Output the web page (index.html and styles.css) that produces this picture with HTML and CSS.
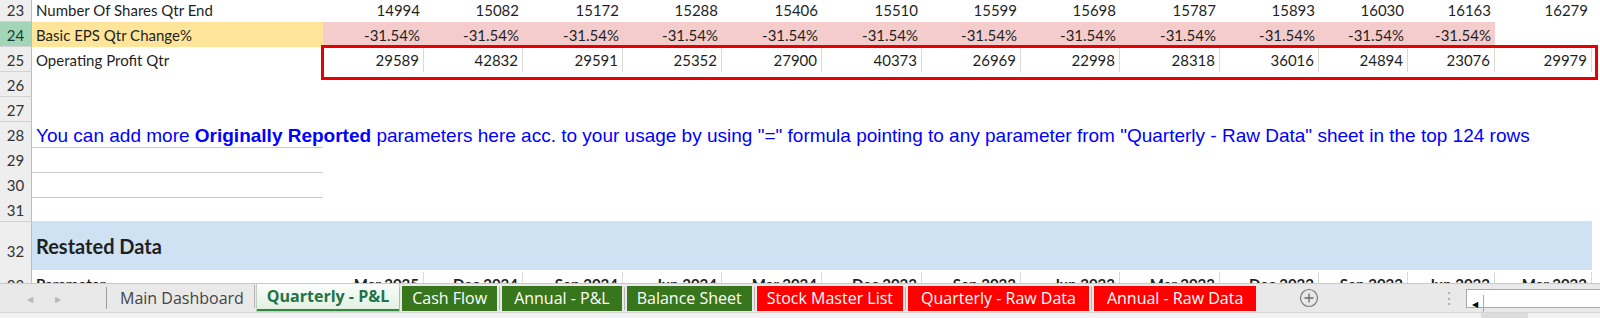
FILE: index.html
```html
<!DOCTYPE html>
<html>
  <head>
    <title>Quarterly - P&amp;L</title>
    <meta charset="UTF-8"/>
    <link rel="stylesheet" href="styles.css">
  </head>
  <body>
    <div class="sheet">
      <div class="rows">
        <div class="row">
          <div class="hd">23</div>
          <div class="c txt">Number Of Shares Qtr End</div>
          <div class="c">14994</div><div class="c">15082</div><div class="c">15172</div><div class="c">15288</div>
          <div class="c">15406</div><div class="c">15510</div><div class="c">15599</div><div class="c">15698</div>
          <div class="c">15787</div><div class="c">15893</div><div class="c">16030</div><div class="c">16163</div>
          <div class="c">16279</div>
        </div>
        <div class="row eps">
          <div class="hd sel">24</div>
          <div class="c txt yellow">Basic EPS Qtr Change%</div>
          <div class="c pink">-31.54%</div><div class="c pink">-31.54%</div><div class="c pink">-31.54%</div><div class="c pink">-31.54%</div>
          <div class="c pink">-31.54%</div><div class="c pink">-31.54%</div><div class="c pink">-31.54%</div><div class="c pink">-31.54%</div>
          <div class="c pink">-31.54%</div><div class="c pink">-31.54%</div><div class="c pink">-31.54%</div><div class="c pink">-31.54%</div>
          <div class="c"></div>
        </div>
        <div class="row lined">
          <div class="hd">25</div>
          <div class="c txt">Operating Profit Qtr</div>
          <div class="c">29589</div><div class="c">42832</div><div class="c">29591</div><div class="c">25352</div>
          <div class="c">27900</div><div class="c">40373</div><div class="c">26969</div><div class="c">22998</div>
          <div class="c">28318</div><div class="c">36016</div><div class="c">24894</div><div class="c">23076</div>
          <div class="c">29979</div>
        </div>
        <div class="row"><div class="hd">26</div></div>
        <div class="row"><div class="hd">27</div></div>
        <div class="row">
          <div class="hd">28</div>
          <div class="c note under">You can add more <b>Originally Reported</b> parameters here acc. to your usage by using "=" formula pointing to any parameter from "Quarterly - Raw Data" sheet in the top 124 rows</div>
        </div>
        <div class="row"><div class="hd">29</div><div class="c under"></div></div>
        <div class="row"><div class="hd">30</div><div class="c under"></div></div>
        <div class="row"><div class="hd">31</div></div>
        <div class="row section">
          <div class="hd">32</div>
          <div class="c band">Restated Data</div>
        </div>
        <div class="row lined head">
          <div class="hd">33</div>
          <div class="c txt">Parameter</div>
          <div class="c">Mar 2025</div><div class="c">Dec 2024</div><div class="c">Sep 2024</div><div class="c">Jun 2024</div>
          <div class="c">Mar 2024</div><div class="c">Dec 2023</div><div class="c">Sep 2023</div><div class="c">Jun 2023</div>
          <div class="c">Mar 2023</div><div class="c">Dec 2022</div><div class="c">Sep 2022</div><div class="c">Jun 2022</div>
          <div class="c">Mar 2022</div>
        </div>
      </div>
      <div class="callout"></div>
    </div>

    <div class="tabbar">
      <div class="nav">
        <span class="arrow">&#9664;</span>
        <span class="arrow">&#9654;</span>
      </div>
      <div class="tabs">
        <div class="tab plain">Main Dashboard</div>
        <div class="tab active">Quarterly - P&amp;L</div>
        <div class="tab green">Cash Flow</div>
        <div class="tab green mid">Annual - P&amp;L</div>
        <div class="tab green">Balance Sheet</div>
        <div class="tab red">Stock Master List</div>
        <div class="tab red wide">Quarterly - Raw Data</div>
        <div class="tab red wide">Annual - Raw Data</div>
      </div>
      <div class="add">
        <svg width="20" height="20" viewBox="0 0 20 20">
          <circle cx="10" cy="10" r="8.5" fill="none" stroke="#7a7a7a" stroke-width="1.2"/>
          <path d="M10 5.5v9M5.5 10h9" stroke="#6a6a6a" stroke-width="1.3"/>
        </svg>
      </div>
      <div class="right">
        <div class="grip">&#8942;</div>
        <div class="hscroll">
          <span class="sbtn">&#9664;</span>
        </div>
      </div>
    </div>
    <div class="status"><span class="thumb"></span></div>
  </body>
</html>
```

FILE: styles.css
```css
body {
  margin: 0;
  background: #fff;
  font-family: 'Lato', sans-serif;
  font-size: 15px;
  color: #1f1f1f;
  width: 1600px;
  height: 318px;
  overflow: hidden;
}
.sheet {
  position: relative;
  height: 283px;
  overflow: hidden;
}
.rows {
  margin-top: -3px;
}
.row {
  display: grid;
  grid-template-columns: 32px 291px 101px 99px 100px 99px 100px 100px 99px 99px 100px 99px 89px 87px 97px 8px;
  height: 25px;
}
.hd {
  background: #eeeeee;
  border-right: 1px solid #bdbdbd;
  border-bottom: 1px solid #d2d2d2;
  text-align: center;
  line-height: 27px;
  color: #333;
  overflow: hidden;
}
.hd.sel {
  background: #a3d6b8;
  color: #1d3b2b;
}
.c {
  text-align: right;
  padding-right: 4px;
  line-height: 27px;
  height: 25px;
  overflow: hidden;
  white-space: nowrap;
}
.c.txt {
  text-align: left;
  padding-left: 4px;
}
.yellow {
  background: #ffe599;
}
.pink {
  background: #f4cccc;
}
.lined .c {
  border-right: 1px solid #dadada;
}
.lined .c.txt {
  border-right: none;
}
.under {
  grid-column: 2;
  border-bottom: 1px solid #c9c9c9;
}
.note {
  overflow: visible;
  text-align: left;
  padding-left: 4px;
  font-family: 'Liberation Sans', Arial, sans-serif;
  font-size: 19px;
  line-height: 27px;
  color: #0000ff;
}
.section {
  height: 50px;
}
.section .hd {
  line-height: 58px;
  height: 50px;
}
.band {
  grid-column: 2 / 16;
  height: 49px;
  margin-top: -1px;
  background: #cfe2f3;
  text-align: left;
  padding-left: 4px;
  font-size: 20px;
  font-weight: bold;
  line-height: 50px;
}
.head .c {
  font-weight: bold;
  line-height: 25px;
}
.callout {
  position: absolute;
  left: 321px;
  top: 45px;
  width: 1271px;
  height: 29px;
  border: 3px solid #e60000;
}

.tabbar {
  display: flex;
  align-items: center;
  height: 28px;
  background: #e9e9e9;
  border-top: 1px solid #c8c8c8;
  font-family: 'Open Sans', sans-serif;
  font-size: 16px;
}
.nav {
  display: flex;
  gap: 22px;
  width: 107px;
  height: 22px;
  padding-left: 27px;
  box-sizing: border-box;
  align-items: center;
  border-right: 1px solid #9e9e9e;
}
.arrow {
  font-size: 8px;
  color: #b8b8b8;
}
.tabs {
  display: flex;
  align-items: center;
  height: 100%;
}
.tab {
  position: relative;
  height: 25px;
  line-height: 24px;
  padding: 0 10px;
  margin-right: 5px;
  white-space: nowrap;
}
.tab.mid {
  padding: 0 12px;
}
.tab.wide {
  padding: 0 13px;
}
.tab + .tab::before {
  content: "";
  position: absolute;
  left: -3px;
  top: 1px;
  bottom: 1px;
  width: 1px;
  background: #b5b5b5;
}
.plain {
  color: #444;
  padding: 0 13px;
  margin-right: 0;
}
.active {
  height: 25px;
  margin-top: -1px;
  background: linear-gradient(#fbfdfb, #e2f0e2);
  border-bottom: 2px solid #2f8a3e;
  color: #217346;
  font-weight: bold;
  box-shadow: 0 0 0 1px #c4cfc4;
  margin-right: 3px;
}
.green {
  background: #38761d;
  color: #fff;
}
.red {
  background: #ff0000;
  color: #fff;
}
.add {
  margin-left: 38px;
  display: flex;
}
.right {
  margin-left: auto;
  width: 159px;
  display: flex;
  align-items: center;
}
.grip {
  color: #a5a5a5;
  font-size: 16px;
  width: 25px;
}
.hscroll {
  flex: 1;
  height: 17px;
  background: #fff;
  border: 1px solid #a9a9a9;
  border-right: none;
}
.sbtn {
  display: inline-block;
  width: 16px;
  height: 17px;
  border-right: 1px solid #a9a9a9;
  font-size: 8px;
  line-height: 17px;
  text-align: center;
  color: #000;
}
.status {
  height: 7px;
  background: #f3f3f3;
  border-top: 1px solid #d6d6d6;
  position: relative;
}
.thumb {
  display: block;
  margin-left: 1481px;
  width: 47px;
  height: 7px;
  background: #dcdcdc;
}
```
